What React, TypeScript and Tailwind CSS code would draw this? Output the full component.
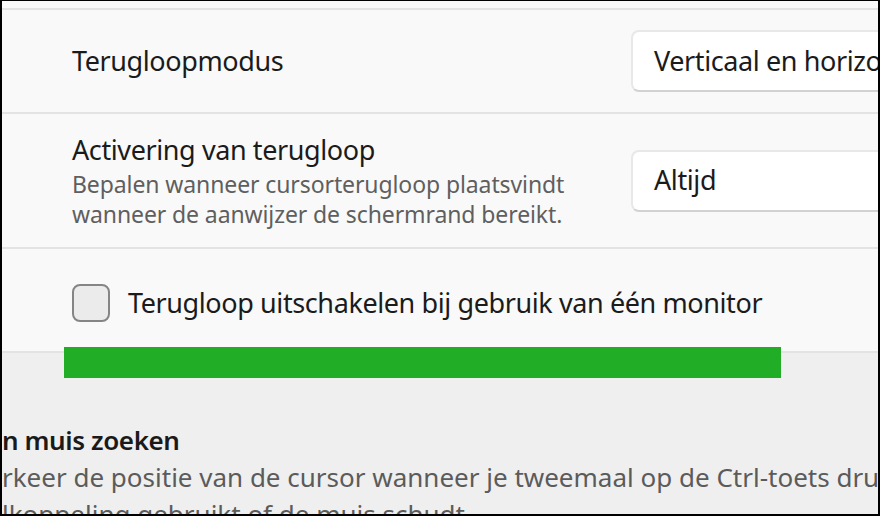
import React from "react";

const font = { fontFamily: '"Noto Sans", "Open Sans", Arial, sans-serif' };

function Dropdown({ label }: { label: string }) {
  return (
    <div className="h-[62px] w-[280px] shrink-0 rounded-[8px] border-2 border-[#e8e8e8] border-b-[#d2d2d2] bg-white flex items-center pl-[21px] text-[27px] tracking-[-0.4px] text-[#1b1b1b] whitespace-nowrap overflow-hidden">
      {label}
    </div>
  );
}

export default function App() {
  return (
    <div
      className="relative w-[880px] h-[516px] overflow-hidden bg-[#efefef] border-black border-l-2 border-t border-r-2 border-b-2"
      style={font}
    >
      <div className="bg-[#f9f9f9]">
        <div className="h-[9px] border-b-2 border-[#e3e3e3]" />

        <div className="h-[104px] flex items-center pl-[70px] border-b-2 border-[#e3e3e3] overflow-hidden">
          <div className="w-[559px] shrink-0 text-[27px] tracking-[-0.4px] text-[#1b1b1b]">Terugloopmodus</div>
          <Dropdown label="Verticaal en horizontaal" />
        </div>

        <div className="h-[135px] flex items-center pl-[70px] border-b-2 border-[#e3e3e3] overflow-hidden">
          <div className="w-[559px] shrink-0 pb-[2px]">
            <div className="text-[27px] tracking-[-0.4px] leading-[38px] text-[#1b1b1b]">Activering van terugloop</div>
            <div className="text-[23px] tracking-[-0.1px] leading-[30px] text-[#5f5f5f]">
              Bepalen wanneer cursorterugloop plaatsvindt
              <br />
              wanneer de aanwijzer de schermrand bereikt.
            </div>
          </div>
          <Dropdown label="Altijd" />
        </div>

        <div className="h-[104px] flex items-center gap-[18px] pl-[70px] pt-[6px] border-b-2 border-[#e3e3e3]">
          <div className="w-[38px] h-[38px] rounded-[8px] border-2 border-[#858585] bg-[#ebebeb] shrink-0" />
          <div className="text-[27px] tracking-[-0.4px] text-[#1b1b1b] whitespace-nowrap">
            Terugloop uitschakelen bij gebruik van één monitor
          </div>
        </div>
      </div>

      <div className="pt-[68px] whitespace-nowrap">
        <div className="text-[26px] tracking-[-0.4px] leading-[38px] font-semibold text-[#1a1a1a]">n muis zoeken</div>
        <div className="text-[26px] leading-[37px] text-[#5b5b5b]">
          rkeer de positie van de cursor wanneer je tweemaal op de Ctrl-toets drukt, een
          <br />
          lkoppeling gebruikt of de muis schudt.
        </div>
      </div>

      <div className="absolute left-[62px] top-[346px] w-[717px] h-[31px] bg-[#22ad26]" />
    </div>
  );
}
